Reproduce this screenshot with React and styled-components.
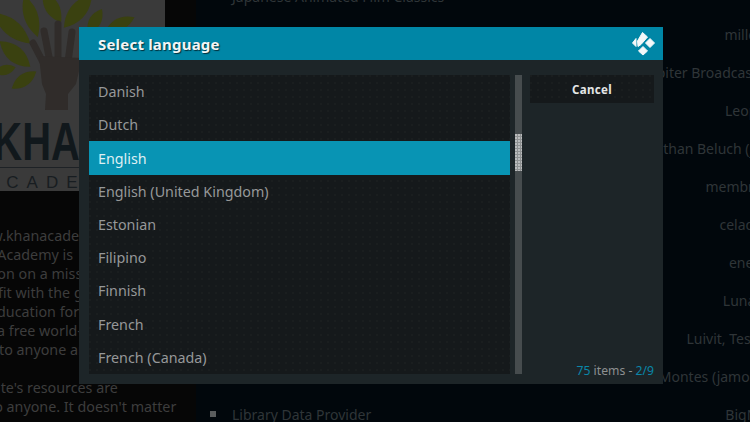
import styled, { createGlobalStyle } from "styled-components";

const GlobalStyle = createGlobalStyle`
  html, body {
    margin: 0;
    padding: 0;
    background: #01070c;
  }
  body {
    font-family: "Noto Sans", sans-serif;
    overflow: hidden;
  }
`;

const dots = `radial-gradient(circle at 1px 1px, rgba(255, 255, 255, 0.02) 1px, transparent 1px)`;

const Screen = styled.div`
  position: relative;
  width: 750px;
  height: 422px;
  overflow: hidden;
  display: flex;
  background: #01070c;
`;

const InfoColumn = styled.div`
  width: 196px;
  flex: none;
  background: #060606;
  overflow: hidden;
`;

const Poster = styled.svg`
  display: block;
  width: 165px;
  height: 191px;
`;

const Synopsis = styled.div`
  margin-top: 35px;
  font-size: 14.3px;
  line-height: 19px;
  color: #3d3d3d;
  white-space: nowrap;
`;

const SynopsisLine = styled.div`
  height: 19px;
  margin-left: ${(p) => p.$shift}px;
`;

const AddonList = styled.div`
  flex: 1;
  margin-top: -23px;
  padding-left: 14px;
  display: flex;
  flex-direction: column;
  min-width: 0;
`;

const AddonRow = styled.div`
  flex: none;
  width: 568px;
  height: 38px;
  display: flex;
  align-items: center;
  font-size: 14px;
  color: #2f3538;
  white-space: nowrap;
`;

const Bullet = styled.span`
  width: 6px;
  height: 6px;
  margin-right: 16px;
  background: ${(p) => (p.$visible ? "#5a5d5e" : "transparent")};
`;

const AddonAuthor = styled.span`
  margin-left: auto;
`;

const Dialog = styled.div`
  position: absolute;
  left: 79px;
  top: 27px;
  width: 584px;
  height: 357px;
  display: flex;
  flex-direction: column;
  background: #1d2528;
`;

const Header = styled.div`
  flex: none;
  height: 33px;
  padding: 0 7px 0 19px;
  display: flex;
  align-items: center;
  justify-content: space-between;
  background: #0086a6;
`;

const Title = styled.div`
  font-size: 15px;
  font-weight: 700;
  letter-spacing: 0.2px;
  color: #f2f5f6;
  text-shadow: 1px 1px 1px #00303c;
`;

const Logo = styled.svg`
  display: block;
  width: 25px;
  height: 25px;
`;

const Body = styled.div`
  flex: 1;
  min-height: 0;
  padding: 15px 9px 4px 10px;
  display: flex;
`;

const LanguageList = styled.div`
  flex: none;
  width: 421px;
  height: 299px;
  display: flex;
  flex-direction: column;
  background-color: #15191b;
  background-image: ${dots};
  background-size: 7px 7px;
`;

const LanguageRow = styled.div`
  flex: 1;
  padding-left: 9px;
  display: flex;
  align-items: center;
  font-size: 14.3px;
  color: ${(p) => (p.$selected ? "#dfeff3" : "#969899")};
  background: ${(p) => (p.$selected ? "#0894b4" : "transparent")};
`;

const ScrollTrack = styled.div`
  flex: none;
  width: 7px;
  height: 299px;
  margin: 0 8px 0 5px;
  background: #464c4e;
`;

const ScrollThumb = styled.div`
  width: 7px;
  height: 37px;
  margin-top: 59px;
  background-color: #8e9192;
  background-image: radial-gradient(circle at 1px 1px, #b9bbbc 1px, transparent 1px);
  background-size: 3px 3px;
`;

const SidePanel = styled.div`
  flex: 1;
  display: flex;
  flex-direction: column;
  justify-content: space-between;
`;

const CancelButton = styled.div`
  height: 28px;
  display: flex;
  align-items: center;
  justify-content: center;
  font-size: 11.5px;
  font-weight: 700;
  letter-spacing: 0.3px;
  color: #e4e6e6;
  background-color: #15191b;
  background-image: ${dots};
  background-size: 7px 7px;
`;

const ItemCount = styled.div`
  text-align: right;
  font-size: 12.2px;
  line-height: 18px;
  color: #8d9091;
`;

const Accent = styled.span`
  color: #0a86a8;
`;

const synopsis = [
  { text: "www.khanacademy.org", shift: -31 },
  { text: "Khan Academy is", shift: -41 },
  { text: "organization on a mission", shift: -70 },
  { text: "non-profit with the goal", shift: -56 },
  { text: "education for", shift: -11 },
  { text: "a free world-class", shift: -3 },
  { text: "to anyone anywhere", shift: -1 },
  { text: "", shift: 0 },
  { text: "website's resources are", shift: -38 },
  { text: "to anyone. It doesn't matter", shift: -11 },
];

const addons = [
  { name: "Japanese Animated Film Classics", author: "", bullet: true },
  { name: "", author: "miller88" },
  { name: "", author: "Jupiter Broadcasting" },
  { name: "", author: "Leopold" },
  { name: "", author: "Jonathan Beluch (jbel)" },
  { name: "", author: "membrane" },
  { name: "", author: "celadons" },
  { name: "", author: "enen92" },
  { name: "", author: "Lunatixz" },
  { name: "", author: "Luivit, Testaru" },
  { name: "", author: "Montes (jamontes" },
  { name: "Library Data Provider", author: "BigNoid", bullet: true },
];

const languages = [
  "Danish",
  "Dutch",
  "English",
  "English (United Kingdom)",
  "Estonian",
  "Filipino",
  "Finnish",
  "French",
  "French (Canada)",
];

const leaves = [
  [12, 28, 24, 8, 40],
  [31, 16, 22, 7, 72],
  [52, 7, 18, 7, 60],
  [78, 11, 22, 8, -50],
  [95, 21, 14, 6, -60],
  [120, 24, 16, 6, -25],
  [15, 54, 20, 8, 40],
  [5, 70, 11, 5, -15],
  [24, 80, 15, 6, -35],
];

function PosterArt() {
  return (
    <Poster viewBox="0 0 165 191">
      <rect width="165" height="191" fill="#3a3a3a" />
      {leaves.map(([x, y, l, w, r]) => (
        <path
          key={`${x}-${y}`}
          d={`M${-l} 0Q0 ${-w * 2} ${l} 0Q0 ${w * 2} ${-l} 0Z`}
          transform={`translate(${x} ${y}) rotate(${r})`}
          fill="#3a4110"
        />
      ))}
      <g stroke="#302c2a" strokeWidth="7" strokeLinecap="round">
        <line x1="58" y1="24" x2="58" y2="62" />
        <line x1="44" y1="31" x2="50" y2="62" />
        <line x1="33" y1="43" x2="46" y2="68" />
        <line x1="72" y1="32" x2="68" y2="62" />
      </g>
      <path d="M39 56L82 58L76 84L68 94L68 110L45 110L46 94L42 84Z" fill="#302c2a" />
      <text
        x="-9"
        y="160"
        transform="scale(0.74 1)"
        fontFamily="Liberation Sans, sans-serif"
        fontWeight="700"
        fontSize="54"
        fill="#11181c"
      >
        KHAN
      </text>
      <rect y="167" width="165" height="1" fill="#1e2226" />
      <text
        x="-13"
        y="188"
        fontFamily="Liberation Sans, sans-serif"
        fontSize="17"
        letterSpacing="8"
        fill="#181d21"
      >
        ACADEMY
      </text>
    </Poster>
  );
}

function KodiLogo() {
  return (
    <Logo viewBox="631 31 25 25">
      <g fill="#f4f8f9" stroke="#f4f8f9" strokeWidth="1" strokeLinejoin="round">
        <path d="M642.5 32.5L647.5 37L641 44.5L638 46.5L637.5 41Z" />
        <path d="M636 38.5L632.5 43L636 46.5Z" />
        <path d="M650 38.5L654.5 43L650 47.5L645.5 43Z" />
        <path d="M643 46.5L647.5 51L643 55L638.5 51Z" />
      </g>
    </Logo>
  );
}

export default function App() {
  return (
    <>
      <GlobalStyle />
      <Screen>
        <InfoColumn>
          <PosterArt />
          <Synopsis>
            {synopsis.map((line, i) => (
              <SynopsisLine key={i} $shift={line.shift}>
                {line.text}
              </SynopsisLine>
            ))}
          </Synopsis>
        </InfoColumn>
        <AddonList>
          {addons.map((addon, i) => (
            <AddonRow key={i}>
              <Bullet $visible={addon.bullet} />
              {addon.name}
              <AddonAuthor>{addon.author}</AddonAuthor>
            </AddonRow>
          ))}
        </AddonList>
        <Dialog>
          <Header>
            <Title>Select language</Title>
            <KodiLogo />
          </Header>
          <Body>
            <LanguageList>
              {languages.map((lang) => (
                <LanguageRow key={lang} $selected={lang === "English"}>
                  {lang}
                </LanguageRow>
              ))}
            </LanguageList>
            <ScrollTrack>
              <ScrollThumb />
            </ScrollTrack>
            <SidePanel>
              <CancelButton>Cancel</CancelButton>
              <ItemCount>
                <Accent>75</Accent> items - <Accent>2/9</Accent>
              </ItemCount>
            </SidePanel>
          </Body>
        </Dialog>
      </Screen>
    </>
  );
}
